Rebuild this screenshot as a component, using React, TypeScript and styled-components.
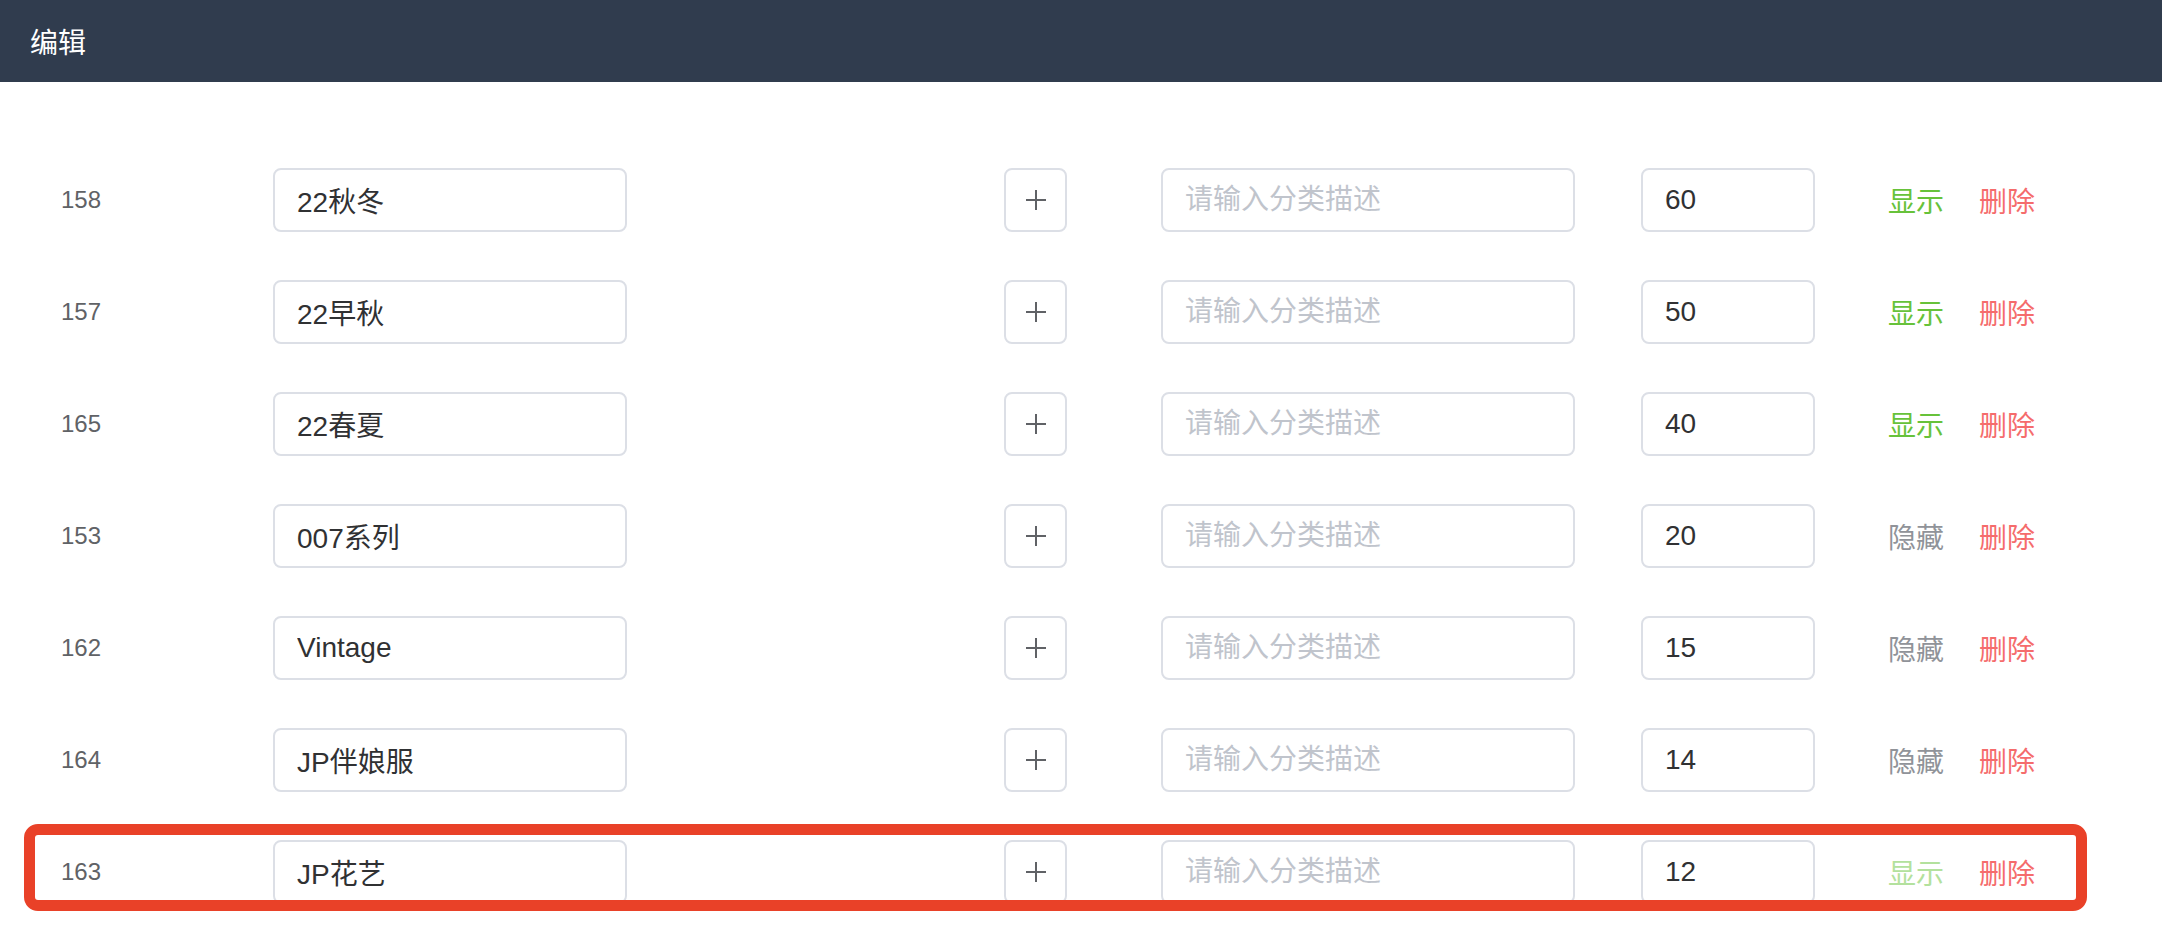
import styled, { createGlobalStyle } from "styled-components";

type Category = {
  id: number;
  name: string;
  sort: number;
  visible: boolean;
  muted?: boolean;
  highlighted?: boolean;
};

const categories: Category[] = [
  { id: 158, name: "22秋冬", sort: 60, visible: true },
  { id: 157, name: "22早秋", sort: 50, visible: true },
  { id: 165, name: "22春夏", sort: 40, visible: true },
  { id: 153, name: "007系列", sort: 20, visible: false },
  { id: 162, name: "Vintage", sort: 15, visible: false },
  { id: 164, name: "JP伴娘服", sort: 14, visible: false },
  { id: 163, name: "JP花艺", sort: 12, visible: true, muted: true, highlighted: true },
];

export default function App() {
  return (
    <Page>
      <GlobalStyle />
      <Header>编辑</Header>
      <List>
        {categories.map((c) => (
          <Row key={c.id}>
            <IdCell>{c.id}</IdCell>
            <NameInput defaultValue={c.name} />
            <PlusButton type="button" aria-label="添加子分类">
              <svg width="20" height="20" viewBox="0 0 20 20">
                <path d="M10 0v20M0 10h20" stroke="#606266" strokeWidth="2" fill="none" />
              </svg>
            </PlusButton>
            <DescInput placeholder="请输入分类描述" />
            <SortInput defaultValue={c.sort} />
            <Actions>
              <ActionLink $tone={c.visible ? (c.muted ? "muted" : "show") : "hide"}>
                {c.visible ? "显示" : "隐藏"}
              </ActionLink>
              <ActionLink $tone="danger">删除</ActionLink>
            </Actions>
            {c.highlighted && <Highlight />}
          </Row>
        ))}
      </List>
    </Page>
  );
}

const GlobalStyle = createGlobalStyle`
  html, body {
    margin: 0;
    padding: 0;
    background: #fff;
  }
  body {
    font-family: "Liberation Sans", "Noto Sans CJK SC", sans-serif;
  }
`;

const Page = styled.div`
  width: 2162px;
  min-height: 936px;
  background: #fff;
`;

const Header = styled.header`
  height: 82px;
  display: flex;
  align-items: center;
  padding: 0 30px;
  background: #303c4e;
  color: #fff;
  font-size: 28px;
`;

const List = styled.div`
  display: flex;
  flex-direction: column;
  gap: 48px;
  padding-top: 86px;
`;

const Row = styled.div`
  position: relative;
  display: grid;
  grid-template-columns: 212px 731px 157px 480px 247px auto;
  align-items: center;
  height: 64px;
  padding-left: 61px;
`;

const IdCell = styled.div`
  font-size: 24px;
  color: #606266;
`;

const Field = styled.input`
  box-sizing: border-box;
  height: 64px;
  padding: 0 22px;
  border: 2px solid #dcdfe6;
  border-radius: 8px;
  background: #fff;
  font-family: inherit;
  font-size: 28px;
  color: #303133;
  outline: none;

  &::placeholder {
    color: #c0c4cc;
  }
`;

const NameInput = styled(Field)`
  width: 354px;
`;

const DescInput = styled(Field)`
  width: 414px;
`;

const SortInput = styled(Field)`
  width: 174px;
`;

const PlusButton = styled.button`
  box-sizing: border-box;
  width: 63px;
  height: 64px;
  display: flex;
  align-items: center;
  justify-content: center;
  padding: 0;
  border: 2px solid #dcdfe6;
  border-radius: 8px;
  background: #fff;
`;

const Actions = styled.div`
  display: flex;
  gap: 35px;
`;

const toneColors = {
  show: "#67c23a",
  muted: "#b3e19d",
  hide: "#909399",
  danger: "#f56c6c",
};

const ActionLink = styled.span<{ $tone: keyof typeof toneColors }>`
  font-size: 28px;
  color: ${(p) => toneColors[p.$tone]};
  cursor: pointer;
`;

const Highlight = styled.div`
  position: absolute;
  top: -16px;
  bottom: -7px;
  left: 24px;
  right: 75px;
  border: 11px solid #e94128;
  border-radius: 14px;
  pointer-events: none;
`;
